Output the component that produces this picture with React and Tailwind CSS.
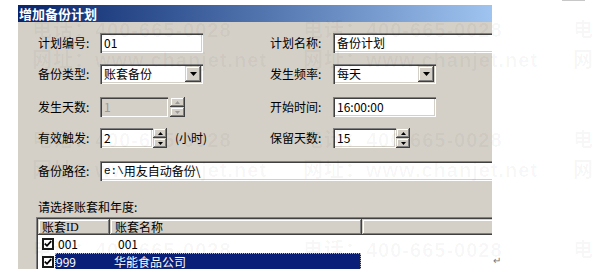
const sunken =
  "shadow-[inset_1px_1px_0_#808080,inset_2px_2px_0_#404040,inset_-1px_-1px_0_#ffffff,inset_-2px_-2px_0_#d4d0c8]";
const raised =
  "shadow-[inset_-1px_-1px_0_#404040,inset_1px_1px_0_#d4d0c8,inset_-2px_-2px_0_#808080,inset_2px_2px_0_#ffffff]";

const Arrow = ({ up, disabled, size = 3 }) => (
  <svg width={size * 2 + 1} height={size + 1} viewBox={`0 0 ${size * 2 + 1} ${size + 1}`}>
    <polygon
      points={up ? `0,${size + 1} ${size * 2 + 1},${size + 1} ${size + 0.5},0` : `0,0 ${size * 2 + 1},0 ${size + 0.5},${size + 1}`}
      fill={disabled ? "#9a9a9a" : "#000"}
    />
  </svg>
);

const TextBox = ({ value, width, disabled, className = "" }) => (
  <div
    className={`shrink-0 h-[20px] flex items-center pl-[4px] pr-[2px] text-[12px] leading-none whitespace-nowrap overflow-hidden ${sunken} ${
      disabled ? "bg-[#d4d0c8] text-[#9a9a9a]" : "bg-white text-black"
    } ${className}`}
    style={{ width }}
  >
    {value}
  </div>
);

const Select = ({ value, width }) => (
  <div className={`shrink-0 h-[20px] bg-white flex items-center p-[2px] ${sunken}`} style={{ width }}>
    <span className="flex-1 pl-[2px] text-[12px] leading-none">{value}</span>
    <div className={`w-[16px] h-[16px] bg-[#d4d0c8] flex items-center justify-center ${raised}`}>
      <Arrow size={3} />
    </div>
  </div>
);

const Spinner = ({ disabled, w = 14 }) => (
  <div className="shrink-0 flex flex-col h-[20px]" style={{ width: w }}>
    <div className={`h-[10px] bg-[#d4d0c8] flex items-center justify-center ${raised}`}>
      <Arrow up disabled={disabled} size={2} />
    </div>
    <div className={`h-[10px] bg-[#d4d0c8] flex items-center justify-center ${raised}`}>
      <Arrow disabled={disabled} size={2} />
    </div>
  </div>
);

const Label = ({ children, w }) => (
  <div className="shrink-0 text-[12px] leading-none text-black whitespace-nowrap" style={{ width: w }}>
    {children}
  </div>
);

const Gap = ({ w }) => <div className="shrink-0" style={{ width: w }} />;

const CheckBox = () => (
  <div className="shrink-0 w-[12px] h-[12px] bg-white border-2 border-[#1a1a1a] flex items-center justify-center">
    <svg width="8" height="8" viewBox="0 0 8 8">
      <path d="M0.8 3.6 L3 5.8 L7.2 1.2" stroke="#000" strokeWidth="1.8" fill="none" />
    </svg>
  </div>
);

const watermarkRows = [30, 140, 250];
const watermarkCols = [32, 303, 573];

export default function App() {
  return (
    <div className="relative w-[592px] h-[269px] bg-white overflow-hidden font-['Noto_Sans_CJK_SC',sans-serif]">
      <div className="absolute left-[562px] top-0 w-[23px] h-[1px] bg-[#c8c8c8]" />

      <div className="ml-[18px] pt-[5px] w-[474px] flex flex-col">
        <div className="h-[17px] bg-gradient-to-r from-[#0a246a] to-[#a0c4f0] flex items-center pl-[1px]">
          <span className="text-white text-[13px] font-bold leading-none">增加备份计划</span>
        </div>

        <div className="h-[247px] bg-[#d4d0c8] overflow-hidden flex flex-col">
          <div className="flex items-center mt-[11px] ml-[20px]">
            <Label w={62}>计划编号:</Label>
            <TextBox value="01" width={103} />
            <Gap w={67} />
            <Label w={63}>计划名称:</Label>
            <TextBox value="备份计划" width={180} />
          </div>

          <div className="flex items-center mt-[11px] ml-[20px]">
            <Label w={62}>备份类型:</Label>
            <Select value="账套备份" width={103} />
            <Gap w={67} />
            <Label w={63}>发生频率:</Label>
            <Select value="每天" width={103} />
          </div>

          <div className="flex items-center mt-[13px] ml-[20px]">
            <Label w={62}>发生天数:</Label>
            <TextBox value="1" width={68} disabled />
            <Gap w={2} />
            <Spinner disabled w={15} />
            <Gap w={85} />
            <Label w={63}>开始时间:</Label>
            <TextBox value="16:00:00" width={103} />
          </div>

          <div className="flex items-center mt-[11px] ml-[20px]">
            <Label w={62}>有效触发:</Label>
            <TextBox value="2" width={53} />
            <Spinner w={14} />
            <Gap w={8} />
            <Label w={95}>(小时)</Label>
            <Label w={63}>保留天数:</Label>
            <TextBox value="15" width={63} />
            <Spinner w={14} />
          </div>

          <div className="flex items-center mt-[13px] ml-[20px]">
            <Label w={62}>备份路径:</Label>
            <TextBox
              value={
                <>
                  <span className="font-['Liberation_Mono',monospace] text-[11px]">e:\</span>
                  <span>用友自动备份\</span>
                </>
              }
              width={420}
            />
          </div>

          <div className="mt-[18px] ml-[20px] text-[12px] leading-[16px] text-black">请选择账套和年度:</div>

          <div className={`mt-[2px] ml-[18px] w-[470px] shrink-0 flex-1 bg-white p-[2px] ${sunken}`}>
            <div className="flex h-[16px] bg-[#d4d0c8] text-[12px] leading-none">
              <div className={`shrink-0 w-[72px] flex items-center pl-[4px] ${raised}`}>
                账套<span className="font-['Liberation_Serif',serif] text-[12px]">ID</span>
              </div>
              <div className={`shrink-0 w-[252px] flex items-center pl-[5px] ${raised}`}>账套名称</div>
              <div className={`flex-1 ${raised}`} />
            </div>

            <div className="flex items-center h-[18px] text-[12px] leading-none">
              <Gap w={4} />
              <CheckBox />
              <Gap w={4} />
              <span className="shrink-0 w-[57px]">001</span>
              <span className="pl-[3px]">001</span>
            </div>

            <div className="flex items-center h-[18px] text-[12px] leading-none">
              <Gap w={4} />
              <CheckBox />
              <div className="shrink-0 h-full w-[306px] ml-[1px] bg-[#0a1f78] outline outline-1 outline-dotted outline-[#b8b8b8] -outline-offset-1 flex items-center text-white">
                <span className="shrink-0 w-[57px] pl-[1px]">999</span>
                <span className="pl-[2px]">华能食品公司</span>
              </div>
            </div>
          </div>
        </div>
      </div>

      <div className="absolute left-[493px] top-[255px] text-[10px] leading-none text-[#777]">↵</div>

      <div className="absolute inset-0 pointer-events-none">
        {watermarkRows.map((y) => (
          <div key={y}>
            {watermarkCols.map((x) => (
              <div key={x}>
                <div
                  className="absolute whitespace-nowrap text-[20px] leading-none font-bold text-black/[0.035] tracking-[1px] font-['Liberation_Sans','Noto_Sans_CJK_SC',sans-serif]"
                  style={{ left: x, top: y - 10 }}
                >
                  电话：400-665-0028
                </div>
                <div
                  className="absolute whitespace-nowrap text-[20px] leading-none font-bold text-black/[0.035] tracking-[1px] font-['Liberation_Sans','Noto_Sans_CJK_SC',sans-serif]"
                  style={{ left: x, top: y + 20 }}
                >
                  网址：www.chanjet.net
                </div>
              </div>
            ))}
          </div>
        ))}
      </div>
    </div>
  );
}
